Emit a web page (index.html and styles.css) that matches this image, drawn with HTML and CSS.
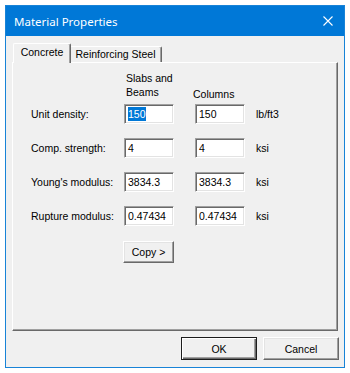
FILE: index.html
```html
<!DOCTYPE html>
<html lang="en">
<head>
  <meta charset="UTF-8" />
  <title>Material Properties</title>
  <link rel="stylesheet" href="styles.css">
</head>
<body>
  <div class="window">
    <div class="titlebar">
      <span class="title">Material Properties</span>
      <svg class="close" width="10" height="10" viewBox="0 0 10 10">
        <path d="M0.5 0.5 L9.5 9.5 M9.5 0.5 L0.5 9.5" stroke="#fff" stroke-width="1.1" fill="none"/>
      </svg>
    </div>

    <div class="client">
      <div class="tabs">
        <div class="tab active">Concrete</div>
        <div class="tab">Reinforcing Steel</div>
      </div>

      <div class="panel">
        <div class="head-row">
          <span></span>
          <span class="head">Slabs and<br>Beams</span>
          <span class="head cols">Columns</span>
        </div>

        <div class="props">
          <span class="label">Unit density:</span>
          <div class="field"><span class="sel">150</span></div>
          <div class="field">150</div>
          <span class="unit">lb/ft3</span>

          <span class="label">Comp. strength:</span>
          <div class="field">4</div>
          <div class="field">4</div>
          <span class="unit">ksi</span>

          <span class="label">Young's modulus:</span>
          <div class="field">3834.3</div>
          <div class="field">3834.3</div>
          <span class="unit">ksi</span>

          <span class="label">Rupture modulus:</span>
          <div class="field">0.47434</div>
          <div class="field">0.47434</div>
          <span class="unit">ksi</span>
        </div>

        <button class="btn copy">Copy &gt;</button>
      </div>

      <div class="actions">
        <button class="btn default">OK</button>
        <button class="btn">Cancel</button>
      </div>
    </div>
  </div>
</body>
</html>
```

FILE: styles.css
```css
* {
  box-sizing: border-box;
  margin: 0;
  padding: 0;
}

body {
  background: #fff;
  padding: 5px;
  font-family: "Liberation Sans", Arial, sans-serif;
  font-size: 10.5px;
  color: #000;
}

.window {
  width: 340px;
  height: 363px;
  border: 1px solid #1883d7;
  background: #f0f0f0;
  display: flex;
  flex-direction: column;
}

.titlebar {
  height: 30px;
  background: #0078d7;
  color: #fff;
  display: flex;
  align-items: center;
  justify-content: space-between;
  padding: 0 11px 0 8px;
  font-family: "Noto Sans", "Open Sans", sans-serif;
  font-size: 11.5px;
}

.close {
  display: block;
}

.client {
  flex: 1;
  padding: 7px 6px 0 6px;
}

.tabs {
  display: flex;
  align-items: flex-end;
  height: 19px;
  padding-left: 1px;
}

.tab {
  height: 16px;
  width: 92px;
  border-top: 1px solid #fff;
  border-right: 1px solid #696969;
  box-shadow: inset -1px 0 #a0a0a0;
  border-radius: 2px 2px 0 0;
  text-align: center;
  line-height: 15px;
  margin-left: -1px;
}

.tab.active {
  position: relative;
  z-index: 1;
  width: 58px;
  height: 20px;
  margin-left: 0;
  margin-bottom: -1px;
  border-left: 1px solid #fff;
  background: #f0f0f0;
  line-height: 17px;
}

.panel {
  height: 269px;
  border: 1px solid;
  border-color: #fff #696969 #696969 #fff;
  box-shadow: inset -1px -1px #a0a0a0;
  padding: 8px 0 0 18px;
}

.head-row,
.props {
  display: grid;
  grid-template-columns: 93px 71px 61px auto;
}

.head {
  line-height: 14px;
  padding-left: 2px;
}

.head.cols {
  align-self: end;
  margin-bottom: -2px;
  padding-left: 0;
  margin-left: -2px;
}

.props {
  margin-top: 5px;
  row-gap: 14px;
  align-items: center;
}

.field {
  width: 50px;
  height: 20px;
  background: #fff;
  border: 1px solid;
  border-color: #a0a0a0 #fff #fff #a0a0a0;
  box-shadow: inset 1px 1px #696969, inset -1px -1px #e3e3e3;
  padding: 0 2px 0 3px;
  line-height: 18px;
  white-space: nowrap;
  overflow: hidden;
}

.sel {
  display: inline-block;
  background: #0078d7;
  color: #fff;
  line-height: 14px;
}

.btn {
  font: inherit;
  color: #000;
  background: #f0f0f0;
  border: 1px solid;
  border-color: #fff #696969 #696969 #fff;
  box-shadow: inset -1px -1px #a0a0a0, inset 1px 1px #e3e3e3;
}

.copy {
  display: block;
  width: 51px;
  height: 22px;
  margin: 15px 0 0 92px;
}

.actions {
  display: flex;
  justify-content: flex-end;
  gap: 6px;
  padding: 6px 0 0;
  margin-right: -1px;
}

.actions .btn {
  width: 76px;
  height: 23px;
}

.btn.default {
  border-color: #1c1c1c;
  box-shadow: inset 1px 1px #fff, inset -1px -1px #696969, inset -2px -2px #a0a0a0;
}
```
